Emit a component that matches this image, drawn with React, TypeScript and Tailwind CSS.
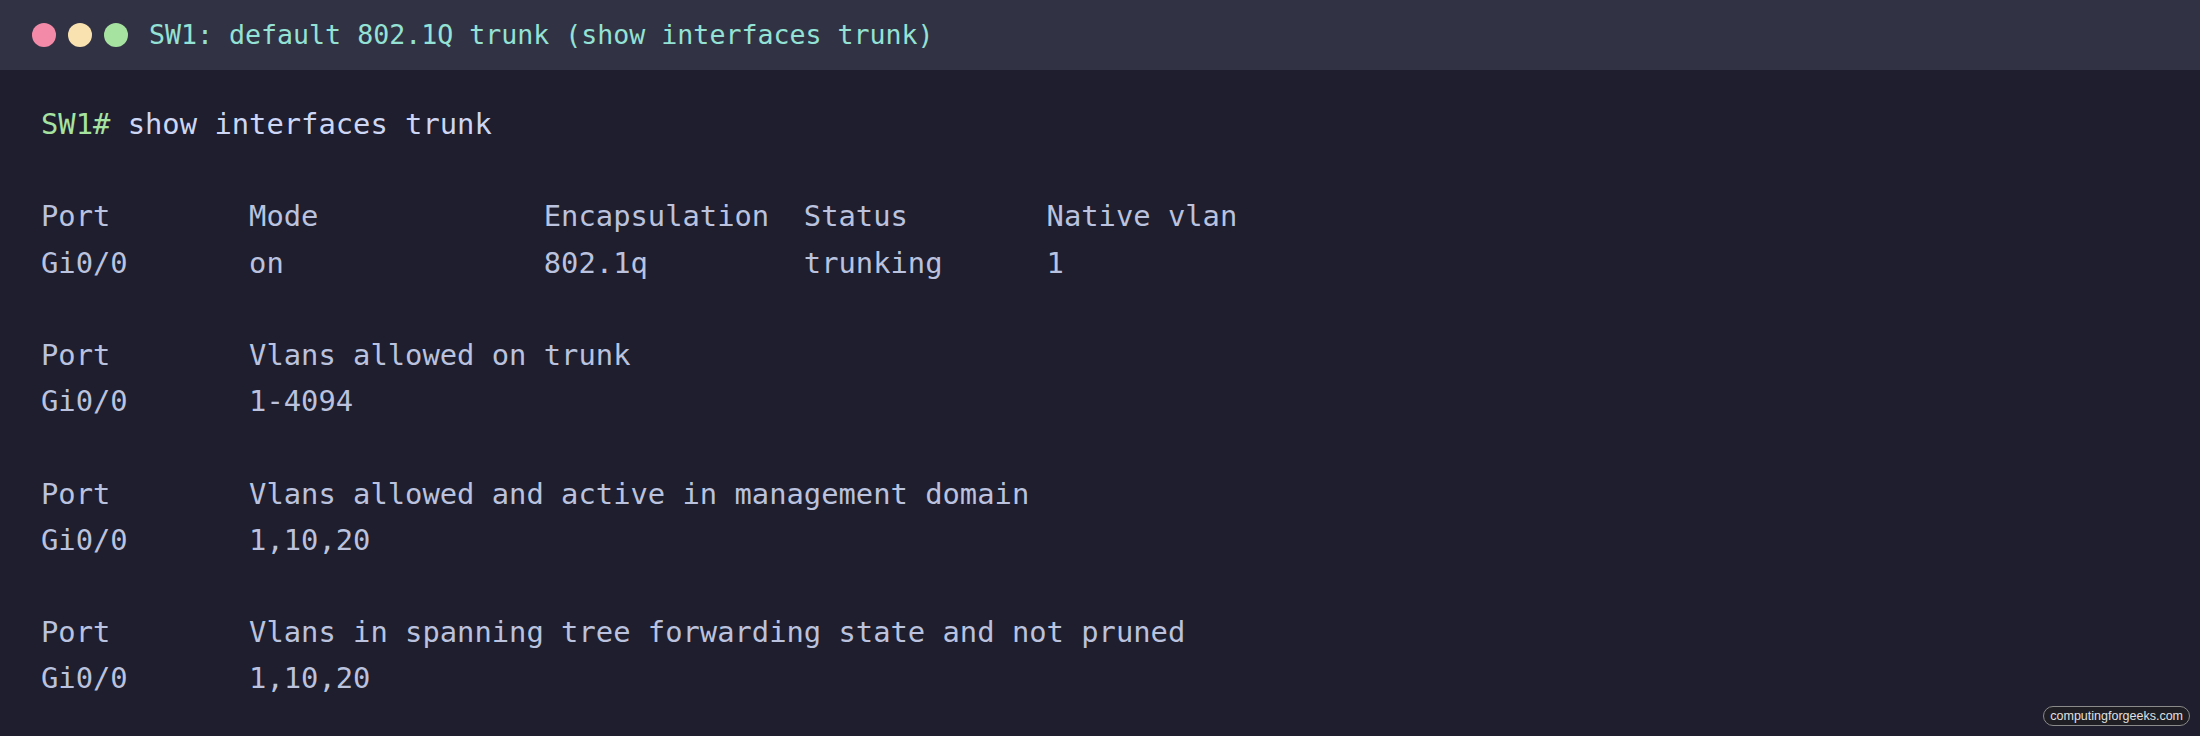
import React from 'react';

const mono = "font-['DejaVu_Sans_Mono','Liberation_Mono',monospace]";

// pad columns like the switch output does
const row = (cols: string[], widths: number[]) =>
  cols.map((c, i) => (i < widths.length ? c.padEnd(widths[i]) : c)).join('');

const blocks: string[][] = [
  [
    row(['Port', 'Mode', 'Encapsulation', 'Status', 'Native vlan'], [12, 17, 15, 14]),
    row(['Gi0/0', 'on', '802.1q', 'trunking', '1'], [12, 17, 15, 14]),
  ],
  [row(['Port', 'Vlans allowed on trunk'], [12]), row(['Gi0/0', '1-4094'], [12])],
  [
    row(['Port', 'Vlans allowed and active in management domain'], [12]),
    row(['Gi0/0', '1,10,20'], [12]),
  ],
  [
    row(['Port', 'Vlans in spanning tree forwarding state and not pruned'], [12]),
    row(['Gi0/0', '1,10,20'], [12]),
  ],
];

export default function App() {
  return (
    <div className="relative w-[2200px] h-[736px] bg-[#1e1e2e] overflow-hidden">
      {/* title bar */}
      <div className="h-[70px] bg-[#313244] flex items-center pl-[32px] gap-[12px]">
        <span className="w-[24px] h-[24px] rounded-full bg-[#f38ba8]" />
        <span className="w-[24px] h-[24px] rounded-full bg-[#f9e2af]" />
        <span className="w-[24px] h-[24px] rounded-full bg-[#a6e3a1]" />
        <span className={`${mono} ml-[9px] text-[26.6px] text-[#94e2d5] whitespace-pre`}>
          SW1: default 802.1Q trunk (show interfaces trunk)
        </span>
      </div>

      {/* terminal body */}
      <div className={`${mono} pt-[31px] pl-[41px] text-[28.8px] leading-[46.2px] whitespace-pre text-[#bac2de]`}>
        <div>
          <span className="text-[#a6e3a1]">SW1#</span>
          <span className="text-[#cdd6f4]"> show interfaces trunk</span>
        </div>
        {blocks.map((lines, i) => (
          <div key={i}>
            <div>&nbsp;</div>
            {lines.map((l, j) => (
              <div key={j}>{l}</div>
            ))}
          </div>
        ))}
      </div>

      {/* watermark badge */}
      <div className="absolute right-[10px] bottom-[10px] h-[20px] px-[6px] flex items-center rounded-full border border-[#8a8a8a] bg-[#1e1e24] font-['Liberation_Sans',Arial,sans-serif] text-[12.5px] text-[#e0e0e0]">
        computingforgeeks.com
      </div>
    </div>
  );
}
